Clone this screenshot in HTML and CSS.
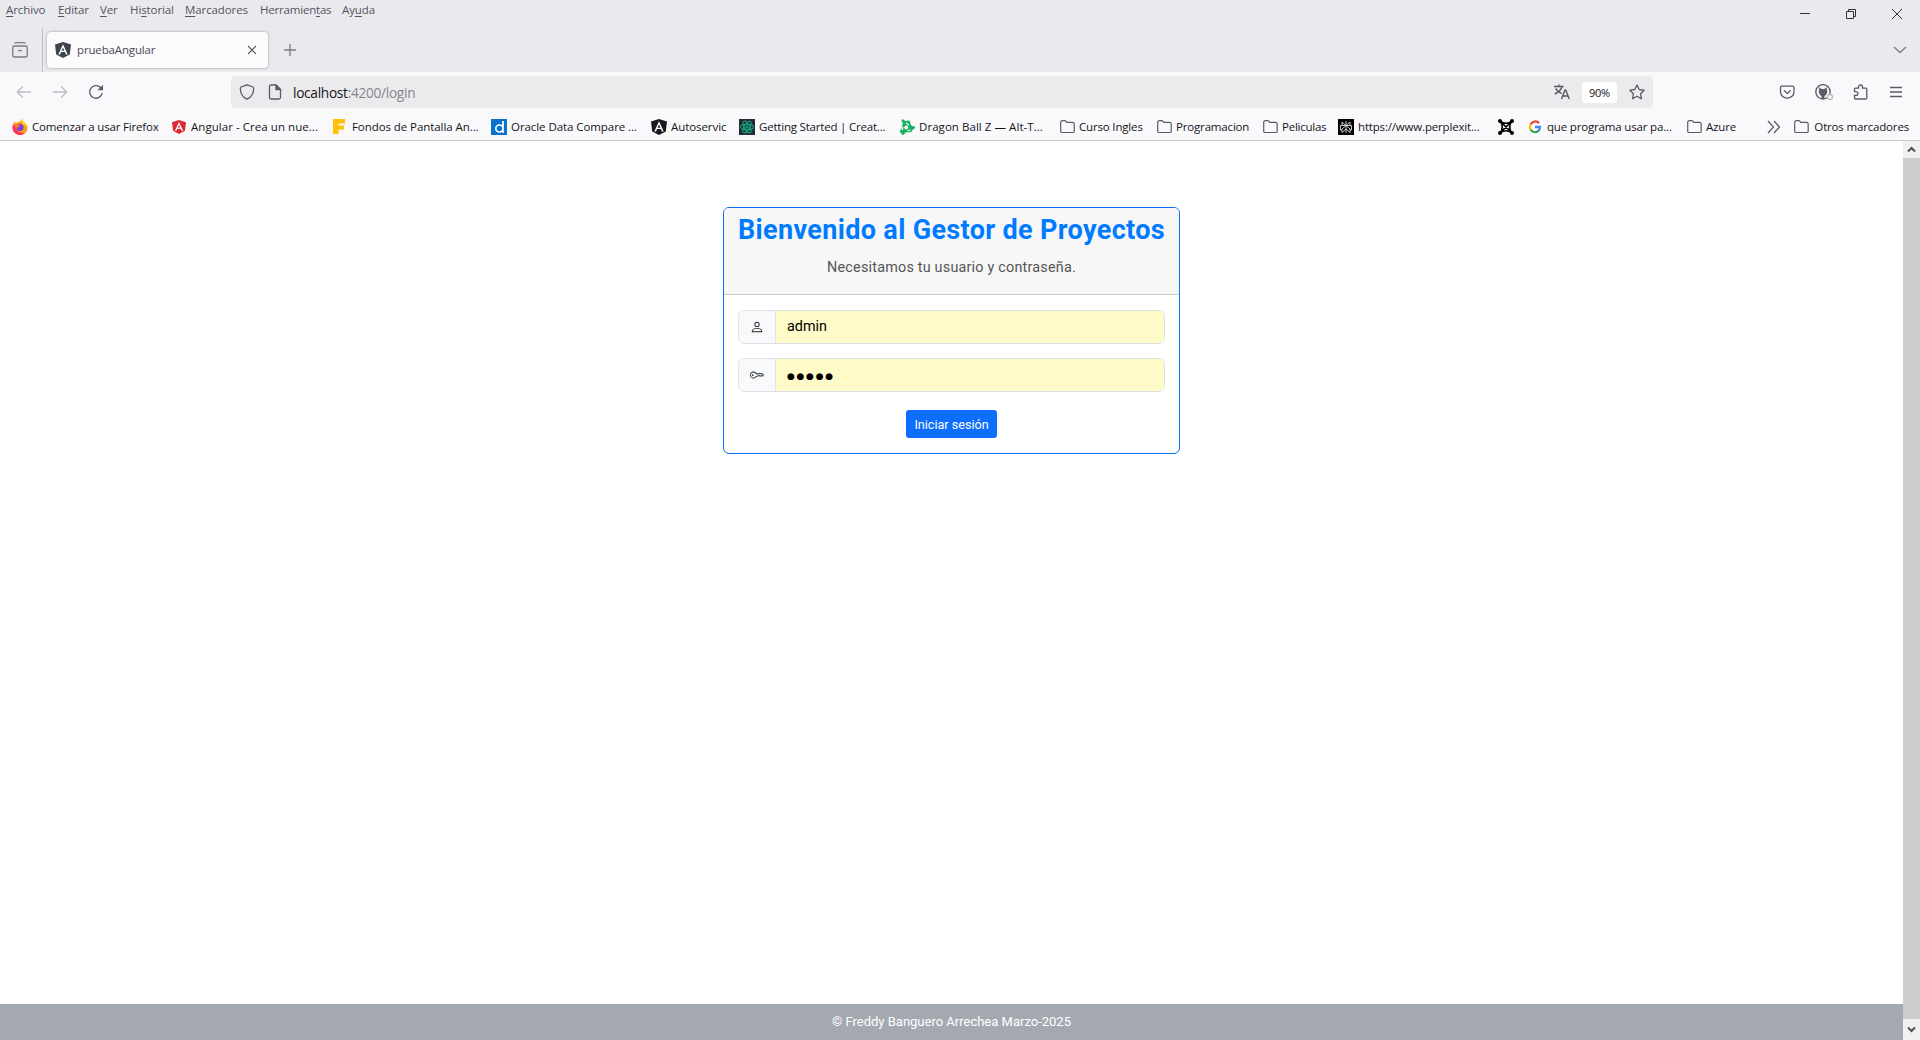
FILE: index.html
```html
<!DOCTYPE html>
<html lang="es">
<head>
<meta charset="utf-8">
<title>pruebaAngular</title>
<link rel="stylesheet" href="styles.css">
</head>
<body>
<svg class="defs" aria-hidden="true">
  <symbol id="folder" viewBox="0 0 16 16"><path d="M.7 12.200V3.400q0-1.700 1.700-1.700h2.400q.7 0 1.200.6l.9 1.100h5.600q1.700 0 1.700 1.700v7.100q0 1.300-1.300 1.300H2q-1.300 0-1.300-1.300z" fill="none" stroke="#5b5b66" stroke-width="1.2"/></symbol>
  <symbol id="angular" viewBox="0 0 16 16"><path d="M8 0l8 2.600-1.200 9.800L8 16l-6.800-3.600L0 2.600z"/><path d="M8 2.200L3.300 12.400h1.800l.9-2.300h4l.9 2.300h1.800zm0 3.300l1.400 3.200H6.600z" fill="#fff"/></symbol>
</svg>
<header class="titlebar">
  <nav class="menu">
    <span class="m1"><u>A</u>rchivo</span><span class="m2"><u>E</u>ditar</span><span class="m3"><u>V</u>er</span><span class="m4">Hi<u>s</u>torial</span><span class="m5"><u>M</u>arcadores</span><span class="m6">Herramien<u>t</u>as</span><span>Ay<u>u</u>da</span>
  </nav>
  <div class="window-controls">
    <svg width="12" height="12" viewBox="0 0 12 12"><path d="M1 5.500h10"/></svg>
    <svg width="12" height="12" viewBox="0 0 12 12"><path d="M1.500 3.500h7v7h-7zM3.500 3.500v-2h7v7h-2"/></svg>
    <svg width="12" height="12" viewBox="0 0 12 12"><path d="M1 1l10 10M11 1L1 11"/></svg>
  </div>
</header>
<div class="tabs">
  <div class="recent"><svg width="16" height="16" viewBox="0 0 16 16"><path d="M2.500 1.200Q3 .7 4 .7h8q1 0 1.500.5M2.500 4h11q1.800 0 1.800 1.800v7.400q0 1.800-1.800 1.800h-11Q.7 15 .7 13.200V5.800Q.7 4 2.500 4zM6 8.600h4"/></svg></div>
  <div class="tab">
    <svg class="dark" width="16" height="16"><use href="#angular"/></svg>
    <span>pruebaAngular</span>
    <svg class="close" width="10" height="10" viewBox="0 0 10 10"><path d="M1 1l8 8M9 1L1 9"/></svg>
  </div>
  <svg class="plus" width="12" height="12" viewBox="0 0 12 12"><path d="M6 0v12M0 6h12"/></svg>
  <svg class="all-tabs" width="14" height="8" viewBox="0 0 14 8"><path d="M1 1l6 5.500L13 1"/></svg>
</div>
<div class="toolbar">
  <div class="history">
    <svg class="off" width="16" height="16" viewBox="0 0 16 16"><path d="M15 8H1.500M7 2.200L1.300 8 7 13.800"/></svg>
    <svg class="off" width="16" height="16" viewBox="0 0 16 16"><path d="M1 8h13.500M9 2.200L14.700 8 9 13.800"/></svg>
    <svg width="16" height="16" viewBox="0 0 16 16"><path d="M14.200 9A6.300 6.300 0 1 1 12.500 3.500L14 5"/><path d="M15 .8v5.500H9.500z" fill="#5b5b66" stroke="none"/></svg>
  </div>
  <div class="urlbar">
    <svg width="16" height="16" viewBox="0 0 16 16"><path d="M8 .8l6 2.200q.7.3.7 1.200C14.700 9 12.500 13 8 15.200 3.500 13 1.300 9 1.300 4.200q0-.9.7-1.200z"/></svg>
    <svg width="16" height="16" viewBox="0 0 16 16"><path d="M9 1H4Q2.500 1 2.500 2.500v11Q2.500 15 4 15h8q1.500 0 1.500-1.500V5.500z"/><path d="M9 1v4.500h4.500z" fill="#5b5b66"/></svg>
    <span class="url">localhost<i>:4200/login</i></span>
    <svg width="16" height="16" viewBox="0 0 16 16"><path d="M0 2.500h9.500M4.800.5v2M1.500 4.500Q4 8 7.500 9.500M8 2.500Q7 7 .8 10M7.500 15l3.500-9h.7l3.500 9M8.800 12h5.200" stroke-width="1.400"/></svg>
    <span class="zoom">90%</span>
    <svg width="16" height="16" viewBox="0 0 16 16"><path d="M8 1l2.200 4.500 4.900.7-3.500 3.500.8 5L8 12.300l-4.400 2.400.8-5L.9 6.200l4.900-.7z" stroke-linejoin="round"/></svg>
  </div>
  <div class="actions">
    <svg width="16" height="16" viewBox="0 0 16 16"><path d="M3 2.200h10.500q1.500 0 1.500 1.500V7.700a6.750 6.500 0 0 1-13.500 0V3.700q0-1.500 1.500-1.500zM5 6.300l3.300 3.300 3.200-3.300"/></svg>
    <svg width="18" height="16" viewBox="0 0 18 16"><circle cx="8" cy="7.800" r="7.200"/><path d="M4.500 3l2 2h3l2-2 .8 5-1.300 3-1.500 1v3h-3v-3L5 11 3.700 8z" fill="#5b5b66" stroke="none"/><circle cx="15" cy="13" r="2.500" fill="#f9f9fb" stroke="#bbb"/></svg>
    <svg width="16" height="16" viewBox="0 0 16 16"><path d="M1.500 7.500V5q0-.9.900-.9H5.500V3a2 2 0 0 1 4 0v1.100h3.300q1 0 1 1V14q0 1-1 1H2.500q-1 0-1-1v-2.500H3a1.900 1.900 0 0 0 0-3.800z"/></svg>
    <svg width="14" height="12" viewBox="0 0 14 12"><path d="M1 1.500h12M1 6h12M1 10.500h12"/></svg>
  </div>
</div>
<nav class="bookmarks">
  <ul>
    <li class="b1"><svg width="16" height="16" viewBox="0 0 16 16"><path d="M8 2.500L10 0q.5 2 3 3.500Q15.500 5.500 15.500 9A7.500 7 0 0 1 .5 9Q.3 5 2.500 2.500l1 1.500z" fill="#ff9a1f"/><path d="M10 0q.5 2 3 3.500Q15.500 5.500 15.500 8L11 5 9 2z" fill="#ffdb32"/><path d="M.5 7.500A7.500 8 0 0 0 13 14Q6 15 4 9L2 5z" fill="#ff336a"/><circle cx="8" cy="8.500" r="3.500" fill="#7544d8"/><path d="M3 6q2-1 5 .5L7 8q-2 0-2 2z" fill="#ff7139"/></svg><span>Comenzar a usar Firefox</span></li>
    <li class="b2"><svg class="red" width="14" height="16" viewBox="0 0 16 16"><use href="#angular"/></svg><span>Angular - Crea un nue...</span></li>
    <li class="b3"><svg width="16" height="16"><path d="M1 0h12v4.500H6.500v2h5.500v4H6.500V15H1z" fill="#ffc107"/></svg><span>Fondos de Pantalla An...</span></li>
    <li class="b4"><svg width="16" height="16"><path d="M0 0h16v16H0z" fill="#0873ce"/><path d="M12 2v12M12 9.500a3.600 3.500 0 1 0-7.200 0 3.600 3.500 0 1 0 7.200 0" fill="none" stroke="#fff" stroke-width="1.700"/></svg><span>Oracle Data Compare ...</span></li>
    <li class="b5"><svg class="black" width="16" height="16"><use href="#angular"/></svg><span>Autoservic</span></li>
    <li class="b6"><svg width="16" height="16"><path d="M0 0h16v16H0z" fill="#252b35"/><g fill="none" stroke="#10a37f" stroke-width="1.100"><ellipse cx="8" cy="8" rx="6.500" ry="2.700"/><ellipse cx="8" cy="8" rx="6.500" ry="2.700" transform="rotate(60 8 8)"/><ellipse cx="8" cy="8" rx="6.500" ry="2.700" transform="rotate(120 8 8)"/><circle cx="8" cy="8" r="1"/></g></svg><span>Getting Started | Creat...</span></li>
    <li class="b7"><svg width="16" height="16"><path d="M4 1.500L6 2l4.500-.5L12 6l3 2.500-2.500 4.500-6 .5L4 15l-3.500-2L3 8z" fill="#16b364"/><circle cx="7.300" cy="8.500" r="2" fill="#f9f9fb"/><g fill="#16b364"><circle cx="4" cy="1.800" r="1.600"/><circle cx="14.500" cy="8.500" r="1.500"/><circle cx="4" cy="14.300" r="1.600"/></g><path d="M7 4l3 2M11.500 11l-3 1M3 11l1-3" stroke="#f9f9fb"/></svg><span>Dragon Ball Z — Alt-T...</span></li>
    <li class="b8"><svg width="16" height="16"><use href="#folder"/></svg><span>Curso Ingles</span></li>
    <li class="b9"><svg width="16" height="16"><use href="#folder"/></svg><span>Programacion</span></li>
    <li class="b10"><svg width="16" height="16"><use href="#folder"/></svg><span>Peliculas</span></li>
    <li class="b11"><svg width="16" height="16"><path d="M0 0h16v16H0z" fill="#000"/><path d="M8 2v12M4 3l4 3.500L12 3v3.500M4 3v3.500M2.500 6.500h11v4.500H12M2.500 6.500V11H4M8 6.500L4 10v3.500L8 10l4 3.500V10z" fill="none" stroke="#ddd" stroke-width=".9"/></svg><span>https://www.perplexit...</span></li>
    <li class="b12"><svg width="16" height="16"><g fill="none" stroke="#000" stroke-width="1.700"><path d="M2 2l12 12M14 2L2 14M2.500 2.500q5.500 3.500 11 0-3.500 5.500 0 11-5.500-3.500-11 0 3.500-5.500 0-11z"/></g><circle cx="2" cy="2" r="2"/><circle cx="14" cy="2" r="2"/><circle cx="2" cy="14" r="2"/><circle cx="14" cy="14" r="2"/></svg></li>
    <li class="b13"><svg width="16" height="16"><circle cx="8" cy="8" r="8" fill="#fff"/><g fill="none" stroke-width="2.300"><path d="M12 4.200A5 5 0 0 0 3.600 5.500" stroke="#ea4335"/><path d="M3.600 5.500a5 5 0 0 0 0 5" stroke="#fbbc05"/><path d="M3.600 10.500A5 5 0 0 0 11.500 11.800" stroke="#34a853"/><path d="M11.500 11.800Q13 10.500 13 8H8" stroke="#4285f4"/></g></svg><span>que programa usar pa...</span></li>
    <li class="b14"><svg width="16" height="16"><use href="#folder"/></svg><span>Azure</span></li>
  </ul>
  <svg class="more" width="14" height="14" viewBox="0 0 14 14"><path d="M1 1l5.500 6L1 13M7 1l5.500 6L7 13"/></svg>
  <div class="other"><svg width="16" height="16"><use href="#folder"/></svg><span>Otros marcadores</span></div>
</nav>
<div class="viewport">
  <div class="page">
    <main>
      <section class="card">
        <div class="card-header">
          <h1>Bienvenido al Gestor de Proyectos</h1>
          <p>Necesitamos tu usuario y contraseña.</p>
        </div>
        <form class="card-body">
          <div class="field">
            <span class="addon"><svg width="14" height="14" viewBox="0 0 16 16"><path d="M8 8a3 3 0 1 0 0-6 3 3 0 0 0 0 6m2-3a2 2 0 1 1-4 0 2 2 0 0 1 4 0m4 8c0 1-1 1-1 1H3s-1 0-1-1 1-4 6-4 6 3 6 4m-1-.004c-.001-.246-.154-.986-.832-1.664C11.516 10.680 10.289 10 8 10s-3.516.680-4.168 1.332c-.678.678-.830 1.418-.832 1.664z"/></svg></span>
            <input type="text" value="admin">
          </div>
          <div class="field">
            <span class="addon"><svg width="14" height="14" viewBox="0 0 16 16"><path d="M0 8a4 4 0 0 1 7.465-2H14a.5.5 0 0 1 .354.146l1.500 1.500a.5.5 0 0 1 0 .708l-1.500 1.500a.5.5 0 0 1-.708 0L13 9.207l-.646.647a.5.5 0 0 1-.708 0L11 9.207l-.646.647a.5.5 0 0 1-.708 0L9 9.207l-.646.647A.5.5 0 0 1 8 10h-.535A4 4 0 0 1 0 8m4-3a3 3 0 1 0 2.712 4.285A.5.5 0 0 1 7.163 9h.630l.853-.854a.5.5 0 0 1 .708 0l.646.647.646-.647a.5.5 0 0 1 .708 0l.646.647.646-.647a.5.5 0 0 1 .708 0l.646.647.793-.793-1-1h-6.630a.5.5 0 0 1-.451-.285A3 3 0 0 0 4 5"/><circle cx="3" cy="8" r="1"/></svg></span>
            <span class="password">●●●●●</span>
          </div>
          <button type="button">Iniciar sesión</button>
        </form>
      </section>
    </main>
    <footer>© Freddy Banguero Arrechea Marzo-2025</footer>
  </div>
  <div class="scrollbar">
    <div class="arrow"><svg width="9" height="7" viewBox="0 0 9 7"><path d="M1 5.500l3.500-3.500L8 5.500"/></svg></div>
    <div class="thumb"></div>
    <div class="arrow last"><svg width="9" height="7" viewBox="0 0 9 7"><path d="M1 1.500L4.500 5 8 1.500"/></svg></div>
  </div>
</div>
</body>
</html>
```
FILE: styles.css
```css
* { box-sizing: border-box; }
body { margin: 0; height: 1040px; display: flex; flex-direction: column; overflow: hidden; background: #fff; font: 11.5px/16px "Open Sans", "Noto Sans", sans-serif; color: #15141a; }
svg { display: block; flex: none; fill: none; stroke: #5b5b66; stroke-width: 1.3; }
.defs { position: absolute; width: 0; height: 0; }
.titlebar { height: 28px; flex: none; display: flex; justify-content: space-between; background: #eae9ee; color: #55545f; }
.menu { display: flex; padding: 2px 0 0 6px; letter-spacing: -0.1px; }
.menu span { white-space: nowrap; }
.menu u { text-underline-offset: 2px; text-decoration-thickness: 1px; }
.m1 { width: 52px; } .m2 { width: 42px; } .m3 { width: 30px; } .m4 { width: 55px; } .m5 { width: 75px; } .m6 { width: 82px; letter-spacing: -0.2px; }
.window-controls { display: flex; gap: 34px; padding: 8px 17px 0 0; }
.window-controls svg { stroke: #333; stroke-width: 1; }
.tabs { height: 44px; flex: none; display: flex; align-items: center; background: #eae9ee; }
.recent { width: 43px; height: 44px; padding: 14px 0 0 12px; border-right: 1px solid #bfbfc5; }
.recent svg, .plus, .all-tabs { stroke: #7b7b84; }
.tab { width: 221px; height: 36px; margin: 0 0 0 4px; padding: 0 11px 0 8px; display: flex; align-items: center; gap: 6px; background: #fbfbfc; border-radius: 4px; box-shadow: 0 0 3px rgba(0,0,0,.35); color: #4a4a55; }
.tab span { flex: 1; letter-spacing: -0.15px; }
.close { stroke-width: 1.1; }
.dark { fill: #3d434b; stroke: none; }
.red { fill: #d92b35; stroke: none; }
.black { fill: #17191f; stroke: none; }
.plus { margin-left: 16px; }
.all-tabs { margin: 0 13px 0 auto; }
.toolbar { height: 40px; flex: none; display: flex; align-items: center; background: #f9f9fb; }
.history { width: 231px; display: flex; gap: 20px; padding-left: 16px; }
.off { stroke: #bdbdc2; }
.urlbar { width: 1422px; height: 32px; display: flex; align-items: center; padding: 0 8px; gap: 12px; background: #ebebed; border-radius: 4px; }
.url { flex: 1; padding-top: 2px; margin-left: -2px; font-size: 13.7px; letter-spacing: -0.3px; }
.url i { font-style: normal; color: #86858d; }
.zoom { width: 35px; height: 21px; background: #fff; border-radius: 3px; text-align: center; line-height: 21px; font-size: 11px; letter-spacing: -0.3px; }
.actions { flex: 1; display: flex; align-items: center; justify-content: flex-end; gap: 20px; padding-right: 17px; }
.bookmarks { height: 29px; flex: none; display: flex; align-items: center; padding: 1px 11px 0 12px; background: #f9f9fb; border-bottom: 1px solid #cbcbcf; white-space: nowrap; letter-spacing: -0.17px; }
.bookmarks ul { display: grid; grid-template-columns: 160px 160px 159px 160px 88px 160px 161px 97px 106px 75px 160px 29px 160px 80px; margin: 0; padding: 0; list-style: none; fill: #000; }
.bookmarks li, .other { display: flex; align-items: center; gap: 4px; }
.bookmarks li svg:not([class]) { stroke: none; }
.b2, .b7 { letter-spacing: 0.05px; }
.bookmarks .b2 { gap: 5px; }
.b3, .b4, .b5 { letter-spacing: -0.07px; }
.b6 { letter-spacing: -0.2px; }
.bookmarks :is(.b8, .b9, .b10, .b14) { gap: 3px; }
.b10 { letter-spacing: -0.25px; }
.b12 svg { fill: #000; }
.more { margin-left: auto; }
.other { margin-left: 13px; }
.viewport { flex: 1; display: flex; min-height: 0; }
.page { flex: 1; display: flex; flex-direction: column; font-family: Roboto, sans-serif; }
main { flex: 1; display: flex; justify-content: center; align-items: flex-start; padding-top: 66px; }
.card { width: 457px; height: 247px; border: 1px solid #0d6efd; border-radius: 6px; overflow: hidden; }
.card-header { height: 87px; padding: 6px 0 0; text-align: center; background: #f7f7f7; border-bottom: 1px solid #c8c8c8; }
h1 { margin: 0; font-size: 27px; line-height: 32px; font-weight: 700; letter-spacing: .34px; color: #007bff; white-space: nowrap; }
.card-header p { margin: 13px 0 0; font-size: 14.4px; line-height: 17px; letter-spacing: .2px; color: #555; }
.card-body { display: flex; flex-direction: column; align-items: center; padding: 15px 14px 0; }
.field { width: 427px; height: 34px; margin-bottom: 14px; display: flex; border: 1px solid #dee2e6; border-radius: 6px; overflow: hidden; }
.addon { width: 37px; display: flex; align-items: center; justify-content: center; padding-bottom: 1px; background: #f8f9fa; border-right: 1px solid #dee2e6; }
.addon svg { fill: #212529; stroke: none; }
.field input, .password { flex: 1; min-width: 0; margin: 0; border: 0; padding: 0 11px; background: #fffbc8; color: #000; font: 14.4px/32px Roboto, sans-serif; }
.password { font: 9px/34px "DejaVu Sans", sans-serif; letter-spacing: 1.7px; }
.card button { width: 91px; height: 28px; margin-top: 4px; padding: 0; border: 0; border-radius: 3px; background: #0d6efd; color: #fff; font: 12.6px Roboto, sans-serif; }
footer { height: 36px; background: #a4a9b1; color: #fff; text-align: center; font-size: 13px; line-height: 36px; }
.scrollbar { width: 17px; display: flex; flex-direction: column; background: #f0f0f0; }
.arrow { height: 17px; display: flex; align-items: center; justify-content: center; }
.arrow svg { stroke: #505050; stroke-width: 2; }
.thumb { flex: 1; background: #cdcdcd; }
.last { height: 21px; }
```
